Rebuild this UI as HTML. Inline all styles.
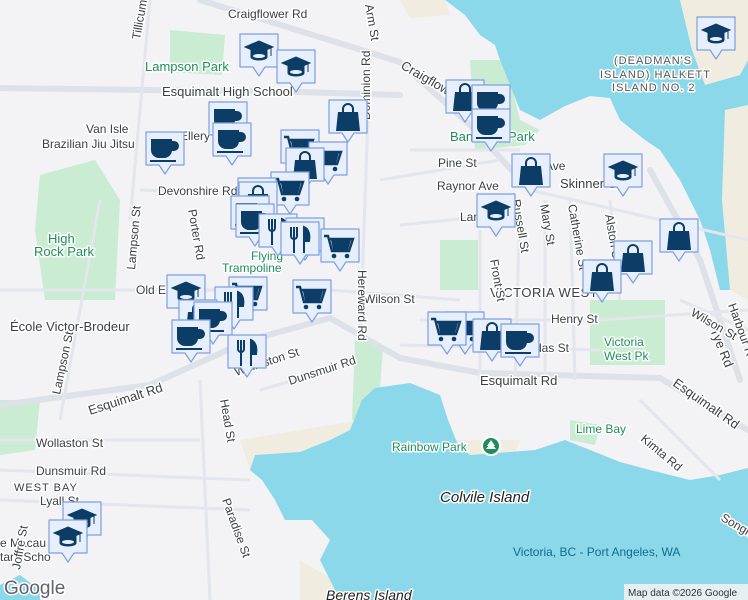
<!DOCTYPE html>
<html><head><meta charset="utf-8"><style>
html,body{margin:0;padding:0;width:748px;height:600px;overflow:hidden;background:#f3f2f5}
svg{display:block}
text{font-family:"Liberation Sans",sans-serif;font-size:12px;fill:#3c4043;paint-order:stroke;stroke:#fff;stroke-width:3px;stroke-linejoin:round}
.g{fill:#1e8e5a}
.w{fill:#0d6e8c;stroke:none}
</style></head><body>
<svg width="748" height="600" viewBox="0 0 748 600" xmlns="http://www.w3.org/2000/svg">
<defs>
<g id="m">
<path d="M-19,-18 h38 v33 h-13 l-6,9 l-6,-9 h-13 z" fill="#e8effc" stroke="#7d9fe0" stroke-width="1.2" stroke-linejoin="round"/>
</g>
<g id="cap"><use href="#m"/><path d="M-14,-5 L0,-11 L14,-5 L0,1 Z M-8,-2 v7 a8,3 0 0 0 16,0 v-7 L0,1 Z M12,-4 v8" fill="#0b3d66" stroke="#0b3d66" stroke-width="1"/><ellipse cx="0" cy="4" rx="6" ry="2" fill="#e8effc"/></g>
<g id="cup"><use href="#m"/><path d="M-13,-10 h19 v10 a7,7 0 0 1 -7,7 h-5 a7,7 0 0 1 -7,-7 z M6,-8 h3 a4,4 0 0 1 0,8 h-3" fill="#0b3d66" stroke="#0b3d66" stroke-width="2"/><rect x="-15" y="10" width="26" height="2" fill="#0b3d66"/></g>
<g id="bag"><use href="#m"/><path d="M-10,-6 h20 l2,19 h-24 z" fill="#0b3d66"/><path d="M-5,-6 v-3 a5,5 0 0 1 10,0 v3" fill="none" stroke="#0b3d66" stroke-width="2"/></g>
<g id="cart"><use href="#m"/><path d="M-16,-11 h4 l4,15 h17 l4,-12 h-23" fill="none" stroke="#0b3d66" stroke-width="2.4"/><path d="M-9,-7 h20 l-3,10 h-15z" fill="#0b3d66"/><circle cx="-6" cy="9" r="2.3" fill="#0b3d66"/><circle cx="7" cy="9" r="2.3" fill="#0b3d66"/></g>
<g id="ut"><use href="#m"/><path d="M-9,-13 v9 a3,3 0 0 0 6,0 v-9 M-6,-13 v26" fill="none" stroke="#0b3d66" stroke-width="2"/><path d="M4,13 v-26 c5,2 6,8 5,14 h-5" fill="#0b3d66" stroke="#0b3d66" stroke-width="2"/></g>
</defs>
<g fill="#c9ecd2">
<path d="M40,175 L95,160 L120,200 L115,300 L45,300 L35,230Z"/>
<path d="M170,30 L225,35 L222,75 L170,72Z"/>
<path d="M470,60 L505,60 L520,120 L540,130 L525,145 L475,150Z"/>
<path d="M440,240 L478,240 L478,290 L440,290Z"/>
<path d="M590,300 L665,300 L665,365 L590,365Z"/>
<path d="M355,340 L383,345 L378,420 L352,420Z"/>
<path d="M570,420 L600,425 L595,445 L570,440Z"/>
<path d="M0,400 L40,400 L35,450 L0,455Z"/>
</g>
<g fill="#f1ece0">
<path d="M400,0 L445,0 L450,15 L410,18Z"/>
<path d="M680,0 L748,0 L748,60 L740,75 L705,85 L692,50Z"/>
<path d="M725,110 L748,105 L748,300 L730,290 L722,200Z"/>
<path d="M240,440 L360,420 L350,450 L300,470 L250,470Z"/>
<path d="M300,560 L350,590 L340,600 L300,600Z"/>
<path d="M455,440 L520,440 L510,465 L460,462Z"/>
</g>
<g fill="#8bd8ea">
<path d="M445,0 L680,0 L692,50 L705,85 L740,75 L748,60 L748,105 L725,110 L722,200 L730,290 L720,290 L710,250 L700,220 L680,180 L660,150 L645,140 L620,120 L610,98 L590,96 L565,106 L540,120 L520,110 L512,90 L500,60 L495,45 L480,35 L465,15Z"/>
<path d="M255,455 L300,452 L330,440 L350,430 L362,400 L375,388 L410,383 L440,395 L448,420 L458,445 L470,455 L510,452 L535,450 L565,440 L590,450 L620,462 L650,470 L690,480 L720,475 L748,468 L748,600 L345,600 L335,590 L320,560 L330,540 L312,520 L285,520 L275,500 L262,480 L250,470Z"/>
<path d="M0,585 L20,575 L40,590 L40,600 L0,600Z"/>
</g>
<g fill="none" stroke="#dde1e8" stroke-width="6" stroke-linecap="round">
<path d="M0,405 L150,385 L250,340 L330,318 L400,358 L480,373 L660,378 L748,430"/>
<path d="M200,0 L400,62 L470,125 L530,190"/>
<path d="M650,170 L700,260 L740,380"/>
<path d="M0,88 L300,92 L400,95"/>
</g>
<g fill="none" stroke="#e3e6ec" stroke-width="3">
<path d="M530,190 L748,240"/><path d="M100,200 L60,420"/><path d="M330,290 L460,300"/>
<path d="M370,60 L360,340"/><path d="M140,190 L270,195"/><path d="M0,290 L230,290"/>
<path d="M410,150 L520,150"/><path d="M380,180 L500,160"/><path d="M400,225 L500,215"/>
<path d="M480,230 L480,380"/><path d="M520,200 L515,380"/><path d="M545,200 L545,380"/>
<path d="M570,200 L575,380"/><path d="M610,200 L620,300"/><path d="M0,470 L250,480"/>
<path d="M0,440 L200,440"/><path d="M0,500 L250,510"/><path d="M150,0 L130,220"/>
<path d="M200,380 L210,600"/><path d="M260,390 L330,370"/><path d="M680,300 L748,330"/>
<path d="M640,400 L720,480"/><path d="M600,320 L748,310"/><path d="M420,320 L600,320"/>
<path d="M400,345 L600,350"/>
</g>
<text x="228" y="18" font-size="13">Craigflower Rd</text>
<text x="145" y="71" class="g" style="font-size:13px">Lampson Park</text>
<text x="162" y="96" style="font-size:13px">Esquimalt High School</text>
<text x="86" y="133">Van Isle</text>
<text x="42" y="148">Brazilian Jiu Jitsu</text>
<text x="180" y="140">Ellery</text>
<text x="158" y="195">Devonshire Rd</text>
<text x="48" y="243" class="g" style="font-size:13px">High</text>
<text x="34" y="256" class="g" style="font-size:13px">Rock Park</text>
<text x="251" y="260" class="g">Flying</text>
<text x="222" y="272" class="g">Trampoline</text>
<text x="136" y="294">Old Es</text>
<text x="10" y="331" style="font-size:13px">École Victor-Brodeur</text>
<text x="364" y="303">Wilson St</text>
<text x="490" y="297" style="font-size:13px;letter-spacing:0.5px">VICTORIA WEST</text>
<text x="551" y="323">Henry St</text>
<text x="535" y="352">das St</text>
<text x="480" y="385" style="font-size:13px">Esquimalt Rd</text>
<text x="604" y="346" class="g">Victoria</text>
<text x="604" y="360" class="g">West Pk</text>
<text x="438" y="167">Pine St</text>
<text x="437" y="190">Raynor Ave</text>
<text x="545" y="170">Ave</text>
<text x="560" y="188" style="font-size:13px">Skinner St</text>
<text x="460" y="221">Langfor</text>
<text x="450" y="141" class="g" style="font-size:13px">Ban</text>
<text x="508" y="141" class="g" style="font-size:13px">Park</text>
<text x="392" y="451" class="g">Rainbow Park</text>
<circle cx="491" cy="446" r="9" fill="#1e8e5a" stroke="#fff" stroke-width="2"/>
<path d="M491,440 l-4,6 h8z M491,443 l-5,6 h10z" fill="#fff"/>
<text x="440" y="502" style="font-size:15px;font-style:italic;fill:#222">Colvile Island</text>
<text x="576" y="433" class="g">Lime Bay</text>
<text x="513" y="556" class="w">Victoria, BC - Port Angeles, WA</text>
<text x="326" y="600" style="font-size:14px;font-style:italic;fill:#222">Berens Island</text>
<text x="614" y="64" style="font-size:11px;letter-spacing:1px;fill:#555">(DEADMAN'S</text>
<text x="600" y="78" style="font-size:11px;letter-spacing:1px;fill:#555">ISLAND) HALKETT</text>
<text x="612" y="91" style="font-size:11px;letter-spacing:1px;fill:#555">ISLAND NO. 2</text>
<text x="14" y="491" style="font-size:11px;letter-spacing:1px">WEST BAY</text>
<text x="36" y="475">Dunsmuir Rd</text>
<text x="36" y="447">Wollaston St</text>
<text x="40" y="505">Lyall St</text>
<text x="0" y="547">e Macau</text>
<text x="0" y="561">tary Scho</text>
<text x="236" y="376" transform="rotate(-18 236 376)">Wollaston St</text>
<text x="290" y="385" transform="rotate(-18 290 385)">Dunsmuir Rd</text>
<text x="90" y="415" transform="rotate(-18 90 415)" style="font-size:13px">Esquimalt Rd</text>
<text x="400" y="68" transform="rotate(30 400 68)" style="font-size:13px">Craigflower</text>
<text x="60" y="395" transform="rotate(-78 60 395)">Lampson St</text>
<text x="135" y="270" transform="rotate(-85 135 270)">Lampson St</text>
<text x="370" y="120" transform="rotate(-90 370 120)">Dominion Rd</text>
<text x="358" y="270" transform="rotate(90 358 270)">Hereward Rd</text>
<text x="188" y="210" transform="rotate(80 188 210)">Porter Rd</text>
<text x="220" y="400" transform="rotate(80 220 400)">Head St</text>
<text x="140" y="40" transform="rotate(-80 140 40)">Tillicum</text>
<text x="365" y="5" transform="rotate(80 365 5)">Arm St</text>
<text x="222" y="500" transform="rotate(70 222 500)">Paradise St</text>
<text x="490" y="260" transform="rotate(80 490 260)">Front St</text>
<text x="512" y="200" transform="rotate(80 512 200)">Russell St</text>
<text x="540" y="205" transform="rotate(80 540 205)">Mary St</text>
<text x="568" y="205" transform="rotate(80 568 205)">Catherine St</text>
<text x="605" y="215" transform="rotate(80 605 215)">Alston St</text>
<text x="710" y="330" transform="rotate(68 710 330)" style="font-size:13px">Tye Rd</text>
<text x="672" y="385" transform="rotate(35 672 385)" style="font-size:13px">Esquimalt Rd</text>
<text x="640" y="440" transform="rotate(40 640 440)">Kimta Rd</text>
<text x="690" y="315" transform="rotate(30 690 315)">Wilson St</text>
<text x="728" y="305" transform="rotate(70 728 305)">Harbour R</text>
<text x="720" y="520" transform="rotate(30 720 520)">Songh</text>
<text x="20" y="570" transform="rotate(-80 20 570)">Joffre St</text>
<use href="#cap" x="259" y="52"/><use href="#cap" x="296" y="68"/>
<use href="#bag" x="348" y="118"/><use href="#bag" x="465" y="98"/>
<use href="#cup" x="491" y="103"/><use href="#cup" x="491" y="127"/>
<use href="#cup" x="228" y="120"/><use href="#cup" x="165" y="150"/><use href="#cup" x="232" y="141"/>
<use href="#cart" x="300" y="148"/><use href="#cart" x="328" y="160"/><use href="#bag" x="305" y="166"/>
<use href="#cart" x="290" y="190"/><use href="#cart" x="257" y="196"/><use href="#bag" x="258" y="200"/>
<use href="#bag" x="531" y="172"/><use href="#cap" x="716" y="35"/><use href="#cap" x="623" y="172"/>
<use href="#cap" x="496" y="212"/><use href="#cup" x="250" y="214"/><use href="#cup" x="255" y="222"/>
<use href="#ut" x="278" y="232"/><use href="#cart" x="305" y="236"/><use href="#ut" x="300" y="240"/>
<use href="#cart" x="340" y="247"/><use href="#bag" x="679" y="237"/><use href="#bag" x="633" y="259"/>
<use href="#bag" x="602" y="278"/><use href="#cap" x="186" y="293"/><use href="#cart" x="248" y="295"/>
<use href="#ut" x="234" y="305"/><use href="#cart" x="312" y="298"/><use href="#bag" x="198" y="318"/>
<use href="#cup" x="213" y="320"/><use href="#cup" x="191" y="338"/><use href="#ut" x="247" y="353"/>
<use href="#cart" x="465" y="330"/><use href="#cart" x="447" y="330"/><use href="#bag" x="492" y="337"/>
<use href="#cup" x="520" y="342"/><use href="#cap" x="82" y="520"/><use href="#cap" x="68" y="538"/>
<text x="4" y="594" style="font-size:19px;fill:#5f6368;stroke-width:3px">Google</text>
<rect x="624" y="584" width="124" height="16" fill="#f5f5f5" fill-opacity="0.85"/>
<text x="628" y="596" style="font-size:10px;stroke:none;fill:#333">Map data ©2026 Google</text>
</svg>
</body></html>
